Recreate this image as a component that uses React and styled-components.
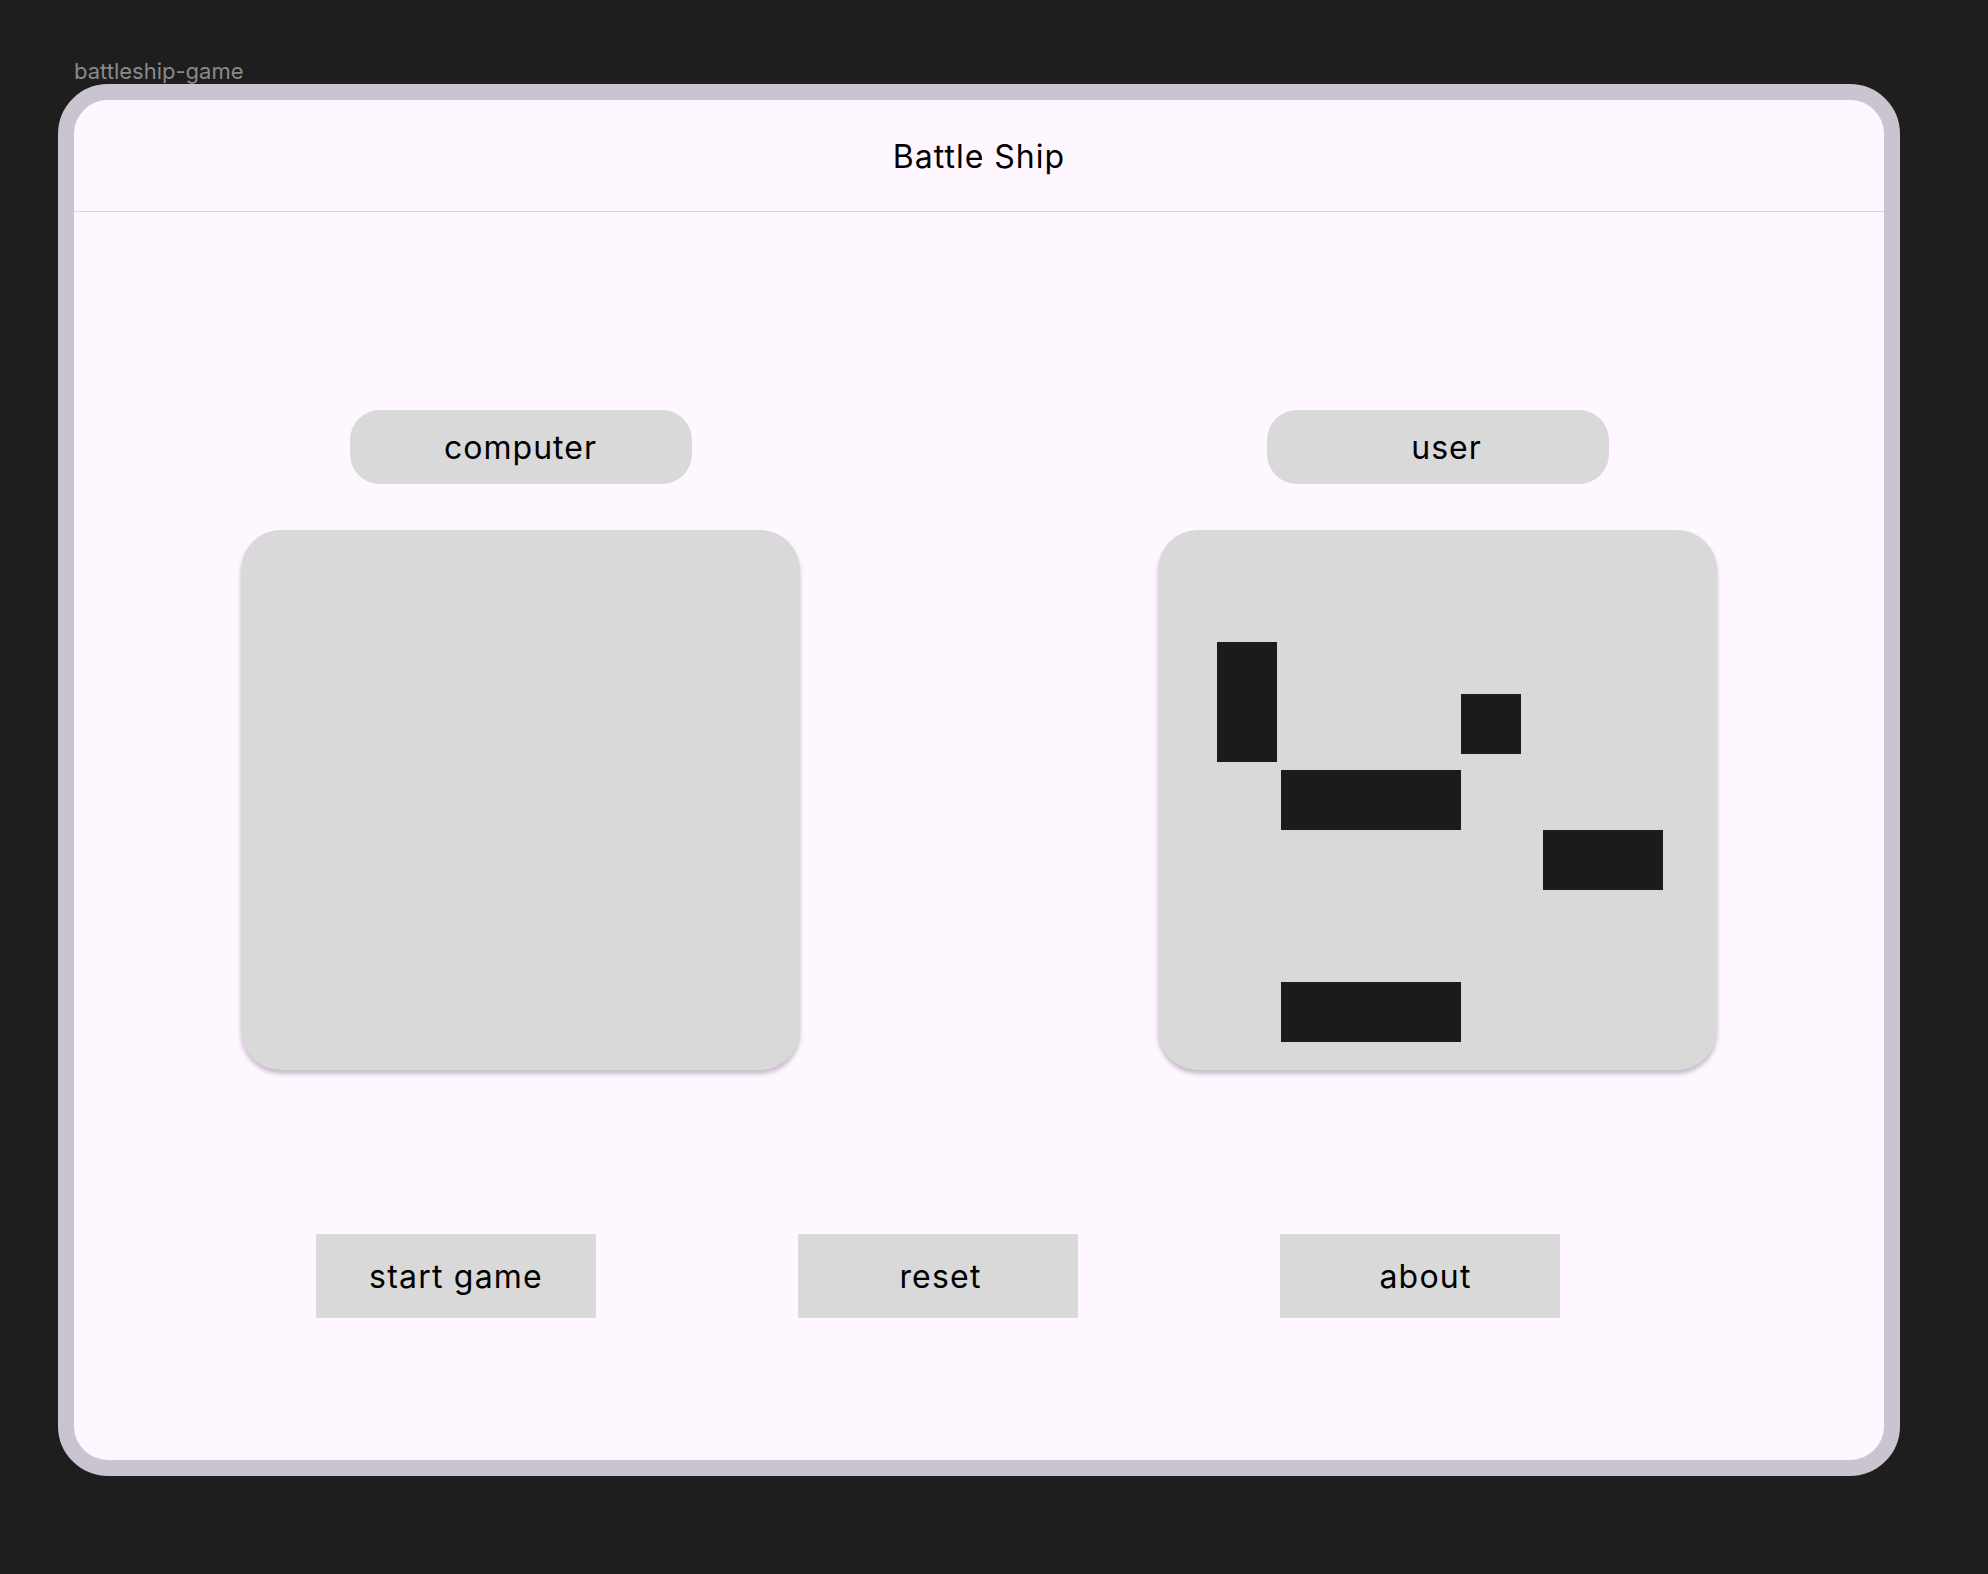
import React from "react";
import styled, { createGlobalStyle } from "styled-components";

const GlobalStyle = createGlobalStyle`
  html,
  body {
    margin: 0;
    padding: 0;
    background: #1e1e1e;
  }

  body {
    font-family: Inter, "Noto Sans", sans-serif;
  }
`;

const Canvas = styled.div`
  box-sizing: border-box;
  min-height: 1574px;
  padding: 58px 0 0 58px;
`;

const FrameLabel = styled.div`
  color: #8a8a8a;
  font-size: 22px;
  height: 26px;
  line-height: 26px;
  padding-left: 16px;
`;

const Frame = styled.main`
  background: #fef7ff;
  border: 16px solid #cac4d0;
  border-radius: 50px;
  box-sizing: border-box;
  display: flex;
  flex-direction: column;
  height: 1392px;
  overflow: hidden;
  width: 1842px;
`;

const Header = styled.header`
  align-items: center;
  border-bottom: 1px solid #dad5dc;
  display: flex;
  height: 111px;
  justify-content: center;
`;

const Title = styled.h1`
  color: #000;
  font-size: 32px;
  font-weight: 400;
  letter-spacing: 1px;
  margin: 2px 0 0;
`;

const Boards = styled.section`
  display: flex;
  gap: 358px;
  justify-content: center;
  margin-top: 198px;
`;

const Side = styled.div`
  align-items: center;
  display: flex;
  flex-direction: column;
  gap: 46px;
`;

const PlayerTag = styled.div`
  align-items: center;
  background: #d9d9d9;
  border-radius: 30px;
  box-sizing: border-box;
  color: #000;
  display: flex;
  font-size: 32px;
  height: 74px;
  justify-content: center;
  letter-spacing: 1px;
  padding-left: ${props => props.$shift || 0}px;
  width: 342px;
`;

const Board = styled.div`
  background: #d9d9d9;
  border-radius: 40px;
  box-shadow: 0 4px 4px rgba(40, 20, 50, 0.25);
  height: 540px;
  position: relative;
  width: 559px;
`;

const Ship = styled.div`
  background: #1c1b1a;
  height: ${props => props.$h}px;
  left: ${props => props.$x}px;
  position: absolute;
  top: ${props => props.$y}px;
  width: ${props => props.$w}px;
`;

const Controls = styled.nav`
  display: flex;
  gap: 202px;
  margin-top: 164px;
  padding-left: 242px;
`;

const Button = styled.button`
  background: #d9d9d9;
  border: none;
  border-radius: 0;
  color: #000;
  font-family: inherit;
  font-size: 32px;
  height: 84px;
  letter-spacing: 1.2px;
  padding: 0 0 0 ${props => props.$shift || 0}px;
  width: 280px;
`;

const userShips = [
  { x: 59, y: 112, w: 60, h: 120 },
  { x: 303, y: 164, w: 60, h: 60 },
  { x: 123, y: 240, w: 180, h: 60 },
  { x: 385, y: 300, w: 120, h: 60 },
  { x: 123, y: 452, w: 180, h: 60 }
];

export default function App() {
  return (
    <>
      <GlobalStyle />
      <Canvas>
        <FrameLabel>battleship-game</FrameLabel>
        <Frame>
          <Header>
            <Title>Battle Ship</Title>
          </Header>

          <Boards>
            <Side>
              <PlayerTag>computer</PlayerTag>
              <Board />
            </Side>
            <Side>
              <PlayerTag $shift={18}>user</PlayerTag>
              <Board>
                {userShips.map((ship, i) => (
                  <Ship key={i} $x={ship.x} $y={ship.y} $w={ship.w} $h={ship.h} />
                ))}
              </Board>
            </Side>
          </Boards>

          <Controls>
            <Button>start game</Button>
            <Button $shift={5}>reset</Button>
            <Button $shift={11}>about</Button>
          </Controls>
        </Frame>
      </Canvas>
    </>
  );
}
